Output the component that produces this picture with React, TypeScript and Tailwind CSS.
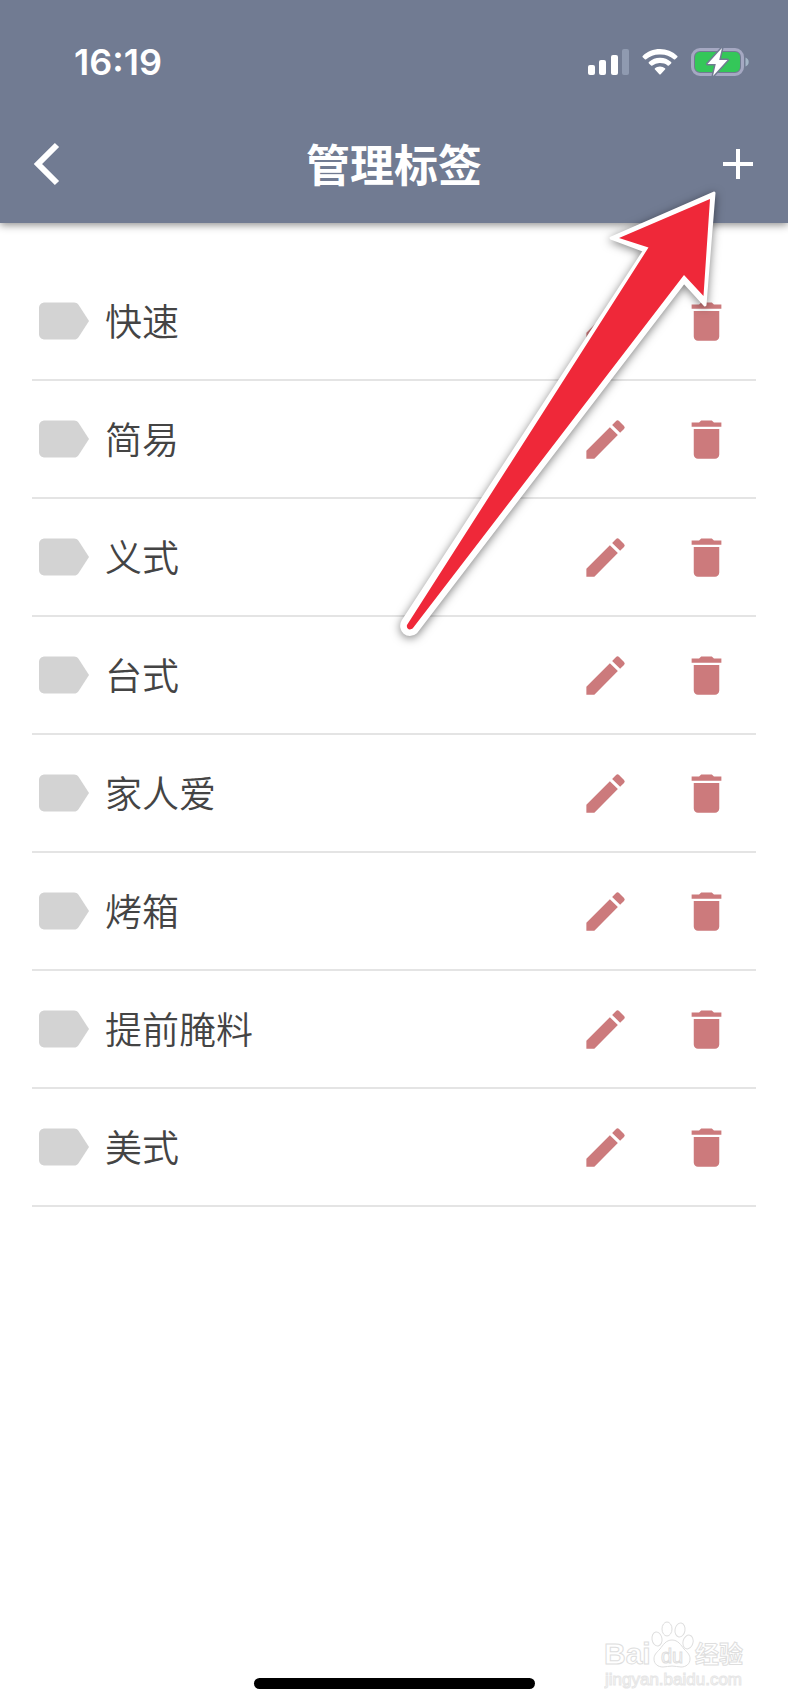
import React from 'react';
import { MdDelete, MdEdit } from 'react-icons/md';

const tags = ['快速', '简易', '义式', '台式', '家人爱', '烤箱', '提前腌料', '美式'];

const SignalIcon: React.FC = () => (
  <svg width="42" height="28" viewBox="0 0 42 28" aria-hidden="true">
    <rect x="0" y="17" width="7" height="10" rx="2" fill="#fff" />
    <rect x="11" y="12" width="7" height="15" rx="2" fill="#fff" />
    <rect x="23" y="7" width="7" height="20" rx="2" fill="#fff" />
    <rect x="34" y="1" width="7" height="26" rx="2" fill="#8f9ab0" />
  </svg>
);

const WifiIcon: React.FC = () => (
  <svg width="36" height="28" viewBox="0 0 36 28" fill="#fff" aria-hidden="true">
    <path d="M18 1C11.3 1 5.2 3.6.7 7.9a.9.9 0 0 0 0 1.3l2.1 2.1c.4.4 1 .4 1.4 0A20 20 0 0 1 18 6.500a20 20 0 0 1 13.8 4.800c.4.4 1 .4 1.4 0l2.1-2.1a.9.9 0 0 0 0-1.3A25 25 0 0 0 18 1z" />
    <path d="M18 9.8a16.3 16.3 0 0 0-11.1 4.300.9.9 0 0 0 0 1.3l2.2 2.2c.4.3.9.3 1.3 0A11.3 11.3 0 0 1 18 15.100c2.900 0 5.600.7 7.600 2.500.4.300.9.300 1.300 0l2.200-2.200a.9.9 0 0 0 0-1.300A16.300 16.300 0 0 0 18 9.800z" />
    <path d="M18 18.400c-2 0-3.700.7-5 1.800a.9.9 0 0 0 0 1.400l4.300 4.700c.4.400 1 .4 1.400 0l4.300-4.700a.9.9 0 0 0 0-1.400 7.700 7.700 0 0 0-5-1.800z" />
  </svg>
);

const BatteryIcon: React.FC = () => (
  <svg width="58" height="28" viewBox="0 0 58 28" aria-hidden="true">
    <rect x="1.5" y="1.5" width="50" height="25" rx="7.5" fill="none" stroke="#a5a8c2" strokeWidth="3" />
    <rect x="4" y="4" width="45" height="20" rx="5" fill="#34c759" />
    <path d="M54.500 9.500c2 .8 3.200 2.500 3.200 4.500s-1.200 3.700-3.200 4.500z" fill="#a3b5c6" />
    <path
      d="M31 0 16.500 16h8.300L22 28 36.500 12h-8.300z"
      fill="#fff"
      stroke="#717b92"
      strokeWidth="3"
      strokeLinejoin="round"
      paintOrder="stroke"
    />
  </svg>
);

const TagIcon: React.FC = () => (
  <svg width="50" height="38" viewBox="0 0 50 38" fill="#d3d3d3" aria-hidden="true">
    <path d="M6 .5h29c2 0 3.300.8 4.500 2.300L50 19 39.500 35.200c-1.200 1.500-2.500 2.300-4.500 2.300H6c-3.500 0-6-2.200-6-5.500V6C0 2.700 2.500.5 6 .5z" />
  </svg>
);

const PointerArrow: React.FC = () => (
  <svg
    className="pointer-events-none absolute top-[180px] right-[58px] drop-shadow-[0_2px_5px_rgba(0,0,0,0.5)]"
    width="340"
    height="470"
    viewBox="390 180 340 470"
    aria-hidden="true"
  >
    <path
      d="M714 193 611 238l33.500 12.500L403 621c-5 9 5 18 13 11L684 282l21 23z"
      fill="#fff"
      stroke="#fff"
      strokeWidth="3"
      strokeLinejoin="round"
    />
    <path d="M710 199 619 238l29.500 9.500L407 625c-1 4 3 6 6 3L684 275l19.500 21z" fill="#ef2839" />
  </svg>
);

const Watermark: React.FC = () => (
  <svg
    className="absolute right-10 bottom-2"
    width="144"
    height="80"
    viewBox="0 0 144 80"
    fill="#fff"
    stroke="#dedede"
    strokeWidth="1"
    fontFamily='"Liberation Sans", "Noto Sans CJK SC", sans-serif'
    fontWeight="bold"
  >
    <text x="0" y="46" fontSize="30">Bai</text>
    <ellipse cx="53" cy="21" rx="5" ry="7" transform="rotate(-10 53 21)" />
    <ellipse cx="63" cy="11" rx="5" ry="7" />
    <ellipse cx="76" cy="12" rx="5" ry="7" transform="rotate(10 76 12)" />
    <ellipse cx="84" cy="24" rx="5" ry="7" transform="rotate(15 84 24)" />
    <path d="M68 22c6 0 9 5 12 9 4 4 6 6 6 10 0 5-4 8-9 8-3 0-6-1-9-1s-6 1-9 1c-5 0-9-3-9-8 0-4 2-6 6-10 3-4 6-9 12-9z" />
    <text x="57" y="45" fontSize="20" fontWeight="normal">du</text>
    <text x="91" y="45" fontSize="24">经验</text>
    <text x="1" y="67" fontSize="17" fontWeight="normal" stroke="#e6e6e6">jingyan.baidu.com</text>
  </svg>
);

const TagRow: React.FC<{ name: string }> = ({ name }) => (
  <li className="flex h-[118px] items-center border-b-2 border-[#e4e4e4] pr-6 pl-[7px]">
    <TagIcon />
    <span className="ml-4 flex-1 pt-1 text-[37px] leading-[40px] font-[350] text-[#444]">{name}</span>
    <div className="flex gap-[50px] text-[#cc7a7c]">
      <button type="button" aria-label={`编辑${name}`}>
        <MdEdit size={51} />
      </button>
      <button type="button" aria-label={`删除${name}`}>
        <MdDelete size={51} />
      </button>
    </div>
  </li>
);

const App: React.FC = () => {
  return (
    <div className="relative flex min-h-screen flex-col bg-white font-['Inter','Noto_Sans_CJK_SC',sans-serif]">
      <header className="bg-[#717b92] text-white shadow-[0_2px_8px_rgba(0,0,0,0.45)]">
        <div className="flex h-[108px] items-center justify-between pt-4 pr-[39px] pl-[74px]">
          <span className="text-[36px] leading-none font-semibold">16:19</span>
          <div className="flex items-center">
            <SignalIcon />
            <span className="ml-3"><WifiIcon /></span>
            <span className="ml-[13px]"><BatteryIcon /></span>
          </div>
        </div>
        <div className="grid h-[115px] grid-cols-[1fr_auto_1fr] items-start px-8 pt-8">
          <button type="button" aria-label="返回" className="justify-self-start">
            <svg width="30" height="48" viewBox="0 0 30 48" fill="none" stroke="#fff" strokeWidth="6">
              <path d="M25 5 6 24l19 19" />
            </svg>
          </button>
          <h1 className="text-[44px] leading-[52px] font-bold">管理标签</h1>
          <button type="button" aria-label="新增标签" className="justify-self-end">
            <svg width="36" height="48" viewBox="0 0 36 48" fill="none" stroke="#fff" strokeWidth="4">
              <path d="M3 24h30M18 9v30" />
            </svg>
          </button>
        </div>
      </header>

      <main className="px-8 pt-10">
        <ul>
          {tags.map((tag) => (
            <TagRow key={tag} name={tag} />
          ))}
        </ul>
      </main>

      <PointerArrow />

      <footer className="relative mt-auto flex justify-center pb-[17px]">
        <Watermark />
        <div className="h-[11px] w-[281px] rounded-full bg-black" />
      </footer>
    </div>
  );
};

export default App;
